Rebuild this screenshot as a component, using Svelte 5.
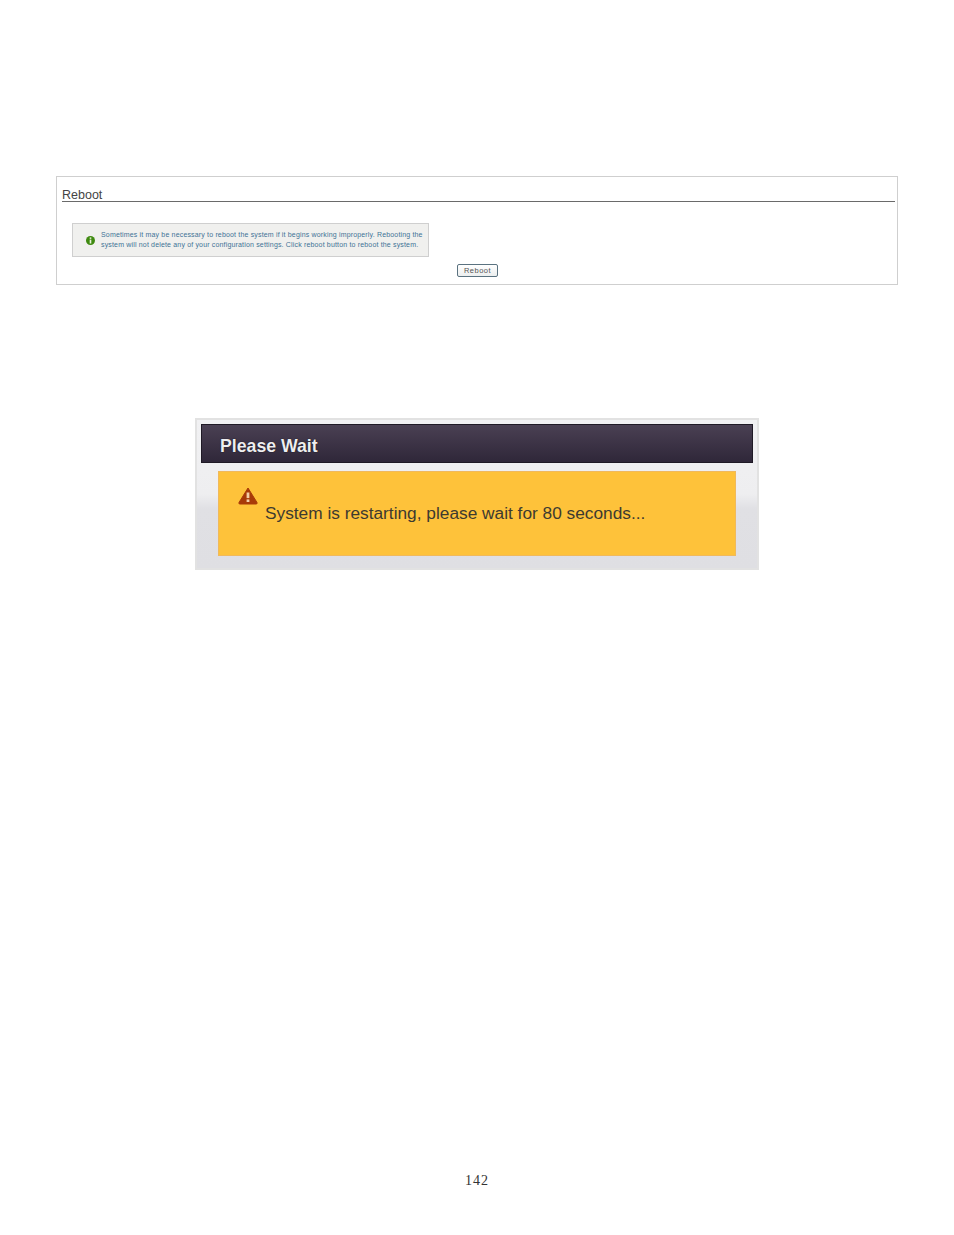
<script>
	const infoLines = [
		'Sometimes it may be necessary to reboot the system if it begins working improperly. Rebooting the',
		'system will not delete any of your configuration settings. Click reboot button to reboot the system.'
	];
</script>

<div class="page">
	<section class="reboot">
		<h2>Reboot</h2>
		<div class="info">
			<svg class="info-icon" width="9" height="9" viewBox="0 0 9 9" aria-hidden="true">
				<circle cx="4.5" cy="4.5" r="4.5" fill="#3f8a10" />
				<rect x="3.7" y="1.4" width="1.6" height="1.5" fill="#e8f2dc" />
				<rect x="3.7" y="3.6" width="1.6" height="3.9" fill="#e8f2dc" />
			</svg>
			<p>
				{#each infoLines as line}
					<span>{line}</span>
				{/each}
			</p>
		</div>
		<div class="actions">
			<button type="button">Reboot</button>
		</div>
	</section>

	<section class="wait">
		<h2>Please Wait</h2>
		<div class="warning">
			<svg class="warning-icon" width="20" height="18" viewBox="0 0 20 18" aria-hidden="true">
				<path d="M10 1 L19 15.5 Q19.6 17 18 17 L2 17 Q0.4 17 1 15.5 Z" fill="#a83a08" stroke="#a83a08" stroke-linejoin="round" />
				<rect x="8.6" y="5.5" width="2.8" height="5.6" fill="#f3cfa8" />
				<rect x="8.6" y="12.4" width="2.8" height="2.6" fill="#f3cfa8" />
			</svg>
			<p>System is restarting, please wait for 80 seconds...</p>
		</div>
	</section>

	<footer>142</footer>
</div>

<style>
	:global(body) {
		background: #fff;
	}

	.page {
		display: flex;
		flex-direction: column;
		align-items: center;
		box-sizing: border-box;
		height: 1235px;
		padding-top: 176px;
		font-family: 'Liberation Sans', Arial, sans-serif;
	}

	.reboot {
		box-sizing: border-box;
		width: 842px;
		height: 109px;
		padding: 10px 2px 0 5px;
		border: 1px solid #cfcfcf;
	}

	.reboot h2 {
		margin: 0;
		height: 14px;
		border-bottom: 1px solid #6a6a6a;
		color: #444;
		font-size: 12.5px;
		font-weight: 400;
		line-height: 17px;
	}

	.info {
		display: flex;
		align-items: center;
		gap: 6px;
		box-sizing: border-box;
		width: 357px;
		height: 34px;
		margin: 21px 0 0 10px;
		padding: 0 0 0 13px;
		background: #f0f0ee;
		border: 1px solid #cfcfcf;
	}

	.info-icon {
		flex: none;
	}

	.info p {
		margin: 0;
		color: #3f7396;
		font-size: 7px;
		letter-spacing: 0.165px;
		line-height: 10px;
		white-space: nowrap;
	}

	.info span {
		display: block;
	}

	.actions {
		display: flex;
		justify-content: flex-start;
		padding: 7px 0 0 395px;
	}

	.actions button {
		box-sizing: border-box;
		width: 41px;
		height: 13px;
		padding: 0;
		background: linear-gradient(#ffffff, #eceeee);
		border: 1px solid #5a7280;
		border-radius: 2px;
		color: #555;
		font-family: inherit;
		font-size: 7.5px;
		letter-spacing: 0.5px;
		line-height: 11px;
	}

	.wait {
		box-sizing: border-box;
		width: 564px;
		height: 152px;
		margin-top: 133px;
		padding: 4px;
		background: linear-gradient(#f1f1f3 0, #eeeef0 50%, #e0e0e4 60%, #dfdfe3 100%);
		border: 2px solid #e2e2e2;
	}

	.wait h2 {
		box-sizing: border-box;
		height: 39px;
		margin: 0;
		padding-left: 18px;
		background: linear-gradient(#4a4053, #2f2739);
		border: 1px solid #1f1a26;
		color: #eeeef0;
		font-size: 17.7px;
		font-weight: 700;
		line-height: 42px;
		text-shadow: 0 0 1px #000;
	}

	.warning {
		box-sizing: border-box;
		width: 518px;
		height: 85px;
		margin: 8px 0 0 17px;
		padding: 15px 0 0 19px;
		background: #fec23a;
		border: 1px solid #f0b95c;
	}

	.warning-icon {
		display: block;
	}

	.warning p {
		margin: -1px 0 0 27px;
		color: #3d3a30;
		font-size: 17.3px;
		line-height: 19px;
		white-space: nowrap;
	}

	footer {
		margin-top: auto;
		padding-bottom: 46px;
		color: #333;
		font-family: 'Liberation Serif', 'Times New Roman', serif;
		font-size: 14px;
		letter-spacing: 1px;
		line-height: 16px;
	}
</style>
